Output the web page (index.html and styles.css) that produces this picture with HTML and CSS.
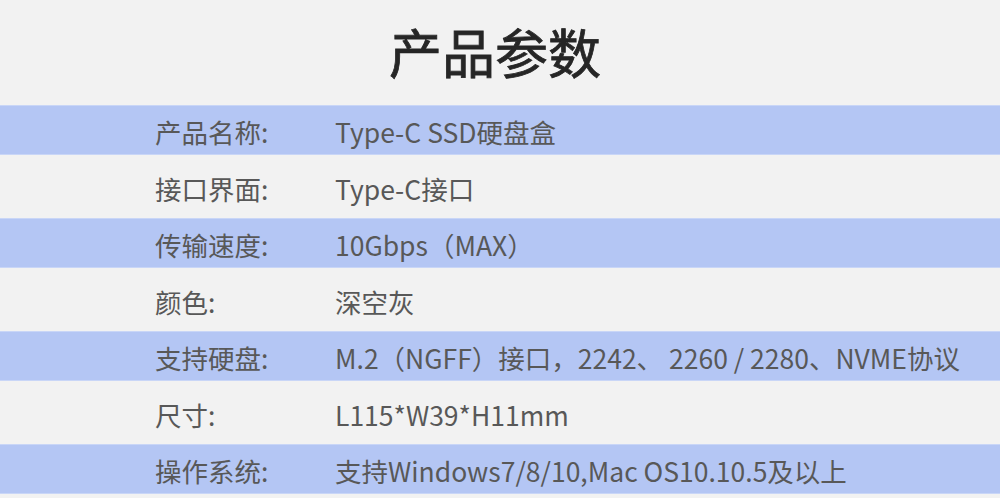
FILE: index.html
```html
<!DOCTYPE html>
<html lang="zh">
<head>
<meta charset="utf-8">
<link rel="stylesheet" href="styles.css">
</head>
<body>
<div class="page">
  <h1 class="title">产品参数</h1>
  <div class="table">
    <div class="row blue"><span class="label">产品名称:</span><span class="value">Type-C SSD硬盘盒</span></div>
    <div class="row light"><span class="label">接口界面:</span><span class="value">Type-C接口</span></div>
    <div class="row blue"><span class="label">传输速度:</span><span class="value">10Gbps（MAX）</span></div>
    <div class="row light"><span class="label">颜色:</span><span class="value">深空灰</span></div>
    <div class="row blue"><span class="label">支持硬盘:</span><span class="value">M.2（NGFF）接口，2242、 2260 / 2280、NVME协议</span></div>
    <div class="row light"><span class="label">尺寸:</span><span class="value">L115*W39*H11mm</span></div>
    <div class="row blue"><span class="label">操作系统:</span><span class="value">支持Windows7/8/10,Mac OS10.10.5及以上</span></div>
  </div>
</div>
</body>
</html>
```
FILE: styles.css
```css
html, body {
  margin: 0;
  padding: 0;
  background: #f2f2f2;
}
.page {
  width: 1000px;
  height: 498px;
  overflow: hidden;
  font-family: "Noto Sans CJK SC", "Noto Sans", sans-serif;
  color: #585858;
}
.title {
  margin: 0;
  height: 105px;
  display: flex;
  align-items: center;
  justify-content: center;
  font-size: 53px;
  font-weight: 400;
  -webkit-text-stroke: 0.8px #262626;
  color: #262626;
  padding: 0 10px 4px 0;
  box-sizing: border-box;
}
.table {
  display: flex;
  flex-direction: column;
}
.row {
  display: flex;
  align-items: center;
  padding-left: 155px;
  padding-top: 3px;
  font-size: 26.5px;
  box-sizing: border-box;
}
.blue {
  height: 50px;
  background: #b4c6f4;
  border-top: 1px solid #c9d6f7;
  border-bottom: 1px solid #c9d6f7;
}
.light {
  height: 63px;
  background: #f2f2f2;
}
.label {
  width: 180px;
  flex: none;
}
.value {
  white-space: nowrap;
}
```
